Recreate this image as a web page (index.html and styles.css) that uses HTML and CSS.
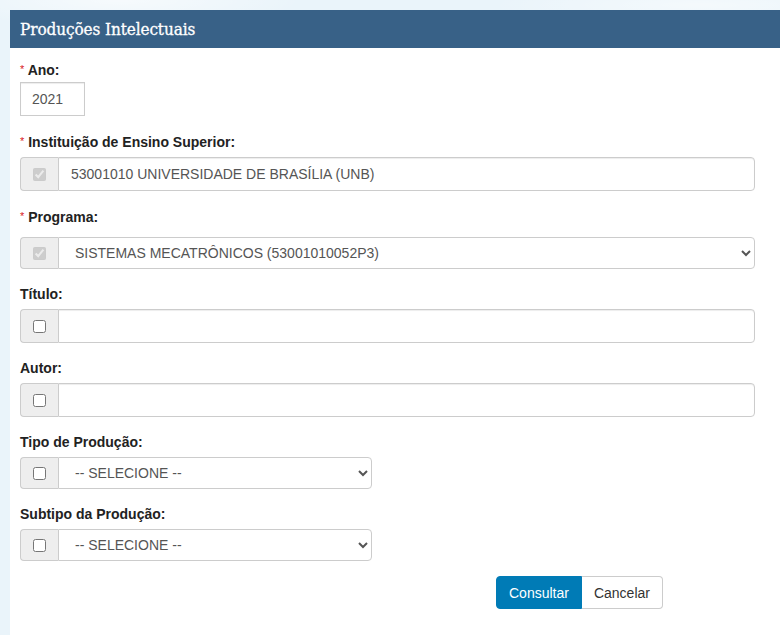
FILE: index.html
```html
<!DOCTYPE html>
<html lang="pt-BR">
<head>
<meta charset="utf-8">
<title>Produções Intelectuais</title>
<link rel="stylesheet" href="styles.css">
</head>
<body>
<div class="page">
  <div class="panel">
    <div class="panel-heading">Produções Intelectuais</div>
    <div class="panel-body">
      <div class="group">
        <div class="label label-tight"><span class="req">*</span> Ano:</div>
        <input class="input input-year" type="text" value="2021">
      </div>

      <div class="group">
        <div class="label"><span class="req">*</span> Instituição de Ensino Superior:</div>
        <div class="input-group">
          <span class="addon"><input type="checkbox" checked disabled></span>
          <input class="input grow" type="text" value="53001010 UNIVERSIDADE DE BRASÍLIA (UNB)">
        </div>
      </div>

      <div class="group">
        <div class="label label-wide"><span class="req">*</span> Programa:</div>
        <div class="input-group sel-group">
          <span class="addon"><input type="checkbox" checked disabled></span>
          <select class="select grow"><option>SISTEMAS MECATRÔNICOS (53001010052P3)</option></select>
        </div>
      </div>

      <div class="group">
        <div class="label">Título:</div>
        <div class="input-group">
          <span class="addon"><input type="checkbox"></span>
          <input class="input grow" type="text" value="">
        </div>
      </div>

      <div class="group">
        <div class="label">Autor:</div>
        <div class="input-group">
          <span class="addon"><input type="checkbox"></span>
          <input class="input grow" type="text" value="">
        </div>
      </div>

      <div class="group">
        <div class="label">Tipo de Produção:</div>
        <div class="input-group sel-group narrow">
          <span class="addon"><input type="checkbox"></span>
          <select class="select grow"><option>-- SELECIONE --</option></select>
        </div>
      </div>

      <div class="group">
        <div class="label">Subtipo da Produção:</div>
        <div class="input-group sel-group narrow">
          <span class="addon"><input type="checkbox"></span>
          <select class="select grow"><option>-- SELECIONE --</option></select>
        </div>
      </div>

      <div class="actions">
        <button class="btn btn-primary" type="button">Consultar</button>
        <button class="btn btn-default" type="button">Cancelar</button>
      </div>
    </div>
  </div>
</div>
</body>
</html>
```

FILE: styles.css
```css
html, body {
  margin: 0;
  height: 100%;
}
body {
  background:
    radial-gradient(ellipse 260px 40px at 120px 0px, rgba(255,255,255,0.6), rgba(255,255,255,0) 70%),
    radial-gradient(ellipse 300px 30px at 700px 5px, rgba(255,255,255,0.5), rgba(255,255,255,0) 70%),
    #eaf4fa;
  font-family: "Liberation Sans", Arial, sans-serif;
  font-size: 14px;
  color: #333;
  overflow: hidden;
}
.page {
  padding: 10px 0 0 10px;
  height: 100%;
  box-sizing: border-box;
}
.panel {
  background: #fff;
  height: 100%;
}
.panel-heading {
  height: 38px;
  background: #386187;
  color: #fff;
  display: flex;
  align-items: center;
  padding: 0 10px;
  font-family: "DejaVu Serif", "Liberation Serif", serif;
  font-stretch: condensed;
  font-size: 17px;
  font-weight: normal;
  -webkit-text-stroke: 0.3px #fff;
  letter-spacing: -0.1px;
}
.panel-body {
  padding: 11px 25px 0 10px;
}
.group {
  margin-bottom: 15px;
}
.label {
  font-weight: bold;
  line-height: 20px;
  margin-bottom: 5px;
  color: #222;
}
.label-tight { margin-bottom: 2px; }
.label-wide { margin-bottom: 10px; }
.req {
  color: #d9161c;
  font-size: 11px;
  vertical-align: 2px;
  font-weight: normal;
}
.input {
  height: 34px;
  box-sizing: border-box;
  border: 1px solid #ccc;
  border-radius: 4px;
  padding: 6px 12px;
  font-family: "Liberation Sans", Arial, sans-serif;
  font-size: 14px;
  color: #555;
  background: #fff;
  outline: none;
  box-shadow: inset 0 1px 1px rgba(0,0,0,0.075);
}
.input-year {
  width: 65px;
  border-radius: 0;
  padding-left: 11px;
}
.input-group {
  display: flex;
  height: 34px;
}
.sel-group { height: 32px; }
.narrow { width: 352px; }
.addon {
  width: 38px;
  box-sizing: border-box;
  background: #eee;
  border: 1px solid #ccc;
  border-right: 0;
  border-radius: 4px 0 0 4px;
  display: flex;
  align-items: center;
  justify-content: center;
}
.addon input {
  margin: 0;
  width: 13px;
  height: 13px;
}
.grow {
  flex: 1;
  min-width: 0;
  border-radius: 0 4px 4px 0;
  height: 100%;
}
.select {
  box-sizing: border-box;
  border: 1px solid #ccc;
  border-radius: 0 4px 4px 0;
  padding: 0 12px;
  font-family: "Liberation Sans", Arial, sans-serif;
  font-size: 14px;
  color: #555;
  background-color: #fff;
  outline: none;
}
.actions {
  display: flex;
  margin-left: 476px;
}
.btn {
  height: 33px;
  font-family: "Liberation Sans", Arial, sans-serif;
  font-size: 14px;
  padding: 0 12px;
  border: 1px solid #ccc;
  cursor: pointer;
}
.btn-primary {
  background: #007bb6;
  border-color: #007bb6;
  color: #fff;
  border-radius: 4px 0 0 4px;
}
.btn-default {
  background: #fff;
  color: #333;
  border-left: 0;
  border-radius: 0 4px 4px 0;
}
```
